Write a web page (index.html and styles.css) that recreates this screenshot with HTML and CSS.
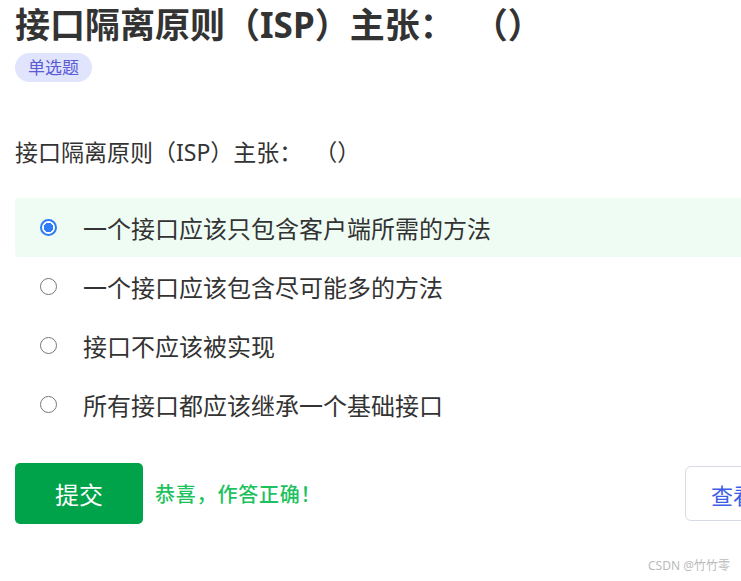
FILE: index.html
```
<html>
<head>
	<meta charset="utf-8">
	<link rel="stylesheet" href="styles.css">
</head>
<body>
<div class="quiz">
	<h1 class="quiz_title">接口隔离原则（ISP）主张：&nbsp;&nbsp;（）</h1>
	<span class="quiz_tag">单选题</span>

	<p class="quiz_question">接口隔离原则（ISP）主张：&nbsp;&nbsp;（）</p>

	<div class="option_list">
		<label class="option_row option_row_correct">
			<input type="radio" name="answer" checked>
			<span>一个接口应该只包含客户端所需的方法</span>
		</label>
		<label class="option_row">
			<input type="radio" name="answer">
			<span>一个接口应该包含尽可能多的方法</span>
		</label>
		<label class="option_row">
			<input type="radio" name="answer">
			<span>接口不应该被实现</span>
		</label>
		<label class="option_row">
			<input type="radio" name="answer">
			<span>所有接口都应该继承一个基础接口</span>
		</label>
	</div>

	<div class="action_row">
		<button class="submit_button">提交</button>
		<span class="result_text">恭喜，作答正确！</span>
		<button class="answer_button">查看解析</button>
	</div>
</div>
<div class="watermark">CSDN @竹竹零</div>
</body>
</html>
```
FILE: styles.css
```
html {
	background: white;
	overflow: hidden;
}

body {
	margin: 0;
	padding: 0 15px;
	width: 800px;
	font-family: "Noto Sans", "Noto Sans CJK SC", sans-serif;
	color: #333;
}

.quiz {
	display: flex;
	flex-direction: column;
	align-items: flex-start;
}

.quiz_title {
	margin: 0;
	font-size: 35px;
	line-height: 50px;
	font-weight: 700;
	color: #333;
}

.quiz_tag {
	margin-top: 3px;
	height: 29px;
	padding: 0 13px;
	border-radius: 15px;
	background: #e1e4fd;
	color: #5b5bd6;
	font-size: 17px;
	line-height: 29px;
}

.quiz_question {
	margin: 52px 0 28px;
	font-size: 23px;
	line-height: 36px;
	color: #333;
}

.option_list {
	display: flex;
	flex-direction: column;
	width: 100%;
}

.option_row {
	display: flex;
	align-items: center;
	column-gap: 26px;
	height: 59px;
	padding-left: 25px;
	border-radius: 4px;
	font-size: 24px;
	color: #333;
	cursor: pointer;
}

.option_row_correct {
	background: #effcf3;
}

.option_row input {
	appearance: none;
	box-sizing: border-box;
	margin: 0;
	width: 17px;
	height: 17px;
	border: 1.5px solid #777;
	border-radius: 50%;
	background: white;
}

.option_row input:checked {
	border: 2px solid #2f7cf6;
	background: radial-gradient(circle, #2f7cf6 0 4.5px, white 5px);
}

.action_row {
	display: flex;
	align-items: center;
	width: 100%;
	margin-top: 29px;
}

button {
	font-family: "Noto Sans", "Noto Sans CJK SC", sans-serif;
	cursor: pointer;
}

.submit_button {
	width: 128px;
	height: 61px;
	border: 0;
	border-radius: 5px;
	background: #00a34a;
	color: white;
	font-size: 24px;
}

.result_text {
	margin-left: 12px;
	color: #1dc25e;
	font-size: 20px;
	font-weight: 500;
	letter-spacing: 0.8px;
}

.answer_button {
	margin-left: auto;
	width: 130px;
	height: 55px;
	padding: 0 0 0 25px;
	border: 1px solid #d6dae6;
	border-radius: 6px;
	background: white;
	color: #3e5ee6;
	font-size: 22px;
	text-align: left;
	white-space: nowrap;
}

.watermark {
	position: absolute;
	right: 11px;
	bottom: 7px;
	color: #bbb;
	font-size: 12px;
}
```
